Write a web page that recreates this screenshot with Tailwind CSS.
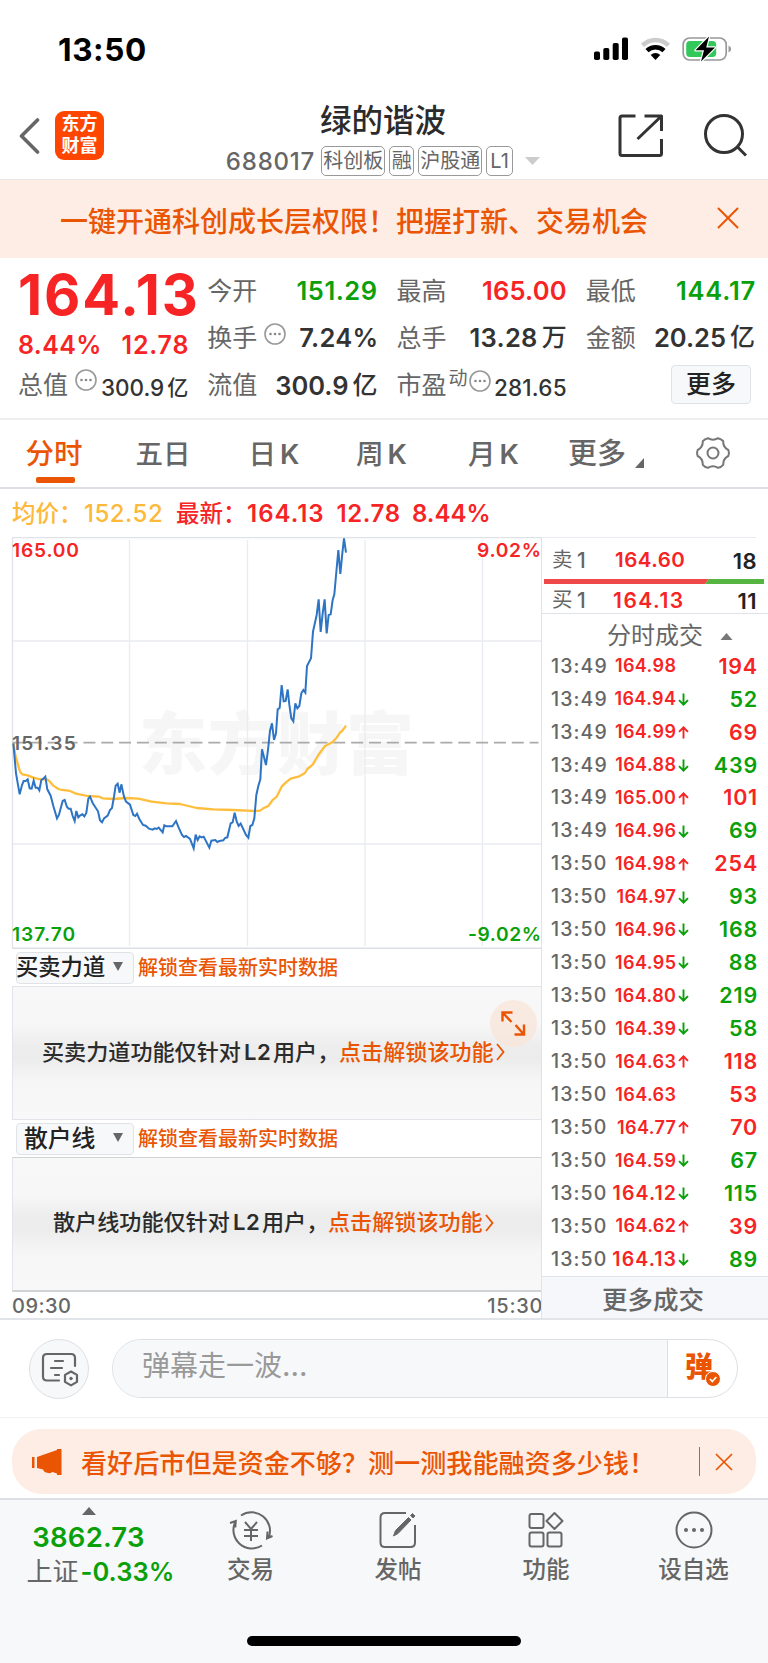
<!DOCTYPE html>
<html lang="zh-CN">
<head>
<meta charset="utf-8">
<title>绿的谐波 688017</title>
<script src="https://cdn.jsdelivr.net/npm/@tailwindcss/browser@4"></script>
</head>
<body class="w-[768px] h-[1663px] overflow-hidden bg-white font-['Inter','Noto_Sans_CJK_SC',sans-serif] font-medium leading-none text-[#666] whitespace-nowrap">

<!-- status bar -->
<div class="h-[98px] flex items-center justify-between pl-[58px] pr-[36px]">
  <span class="text-[31.5px] font-bold text-black tracking-[0.6px] pt-px">13:50</span>
  <div class="flex items-center gap-[11px]">
    <svg width="35" height="24" viewBox="0 0 35 24"><rect x="0" y="14.500" width="6" height="8.500" rx="1.800"/><rect x="9.300" y="11" width="6" height="12" rx="1.800"/><rect x="18.700" y="6" width="6" height="17" rx="1.800"/><rect x="28" y="0.500" width="6" height="22.500" rx="1.800"/></svg>
    <svg width="31" height="24" viewBox="0 0 31 24" fill="none"><path d="M2.500 8.300a18.500 18.500 0 0 1 26 0" stroke="#ccc" stroke-width="4.600"/><path d="M7 13.600a12.300 12.300 0 0 1 17 0" stroke="#000" stroke-width="4.400"/><path d="M15.500 23l-4.800-5a7 7 0 0 1 9.600 0z" fill="#000"/></svg>
    <svg width="50" height="26" viewBox="0 0 50 26"><rect x="1.200" y="2" width="43" height="22" rx="6.500" fill="#fff" stroke="#999" stroke-width="1.700"/><path d="M46.500 9.500v7q2.700-1 2.700-3.500t-2.700-3.500z" fill="#999"/><rect x="4.200" y="5" width="30" height="16" rx="3.800" fill="#34c759"/><path d="M27 0.500L13.500 14.300h8.500L19 25.500 33 11.500h-8.800z" fill="#000" stroke="#fff" stroke-width="2.400" stroke-linejoin="round" paint-order="stroke"/></svg>
  </div>
</div>

<!-- title bar -->
<header class="h-[82px] border-b border-[#e8e8e8] grid grid-cols-[1fr_auto_1fr] pl-[19px] pr-[21px]">
  <div class="flex items-start gap-[15px] pt-[13px]">
    <svg class="mt-[6px]" width="21" height="38" viewBox="0 0 21 38" fill="none" stroke="#666" stroke-width="3.600" stroke-linecap="round" stroke-linejoin="round"><path d="M18.500 3L2.500 19l16 16"/></svg>
    <div class="w-[49px] h-[49px] rounded-[9px] bg-[#ff4600] text-white text-[18px] font-bold leading-[22px] pt-[2px] text-center"><div>东方</div><div>财富</div></div>
  </div>
  <div class="flex flex-col items-center">
    <h1 class="h-[44px] leading-[45px] text-[31.5px] font-medium text-[#2b2b2b]">绿的谐波</h1>
    <div class="h-[38px] flex items-center gap-[4px] text-[20px] font-normal">
      <span class="text-[24px] font-medium tracking-[0.8px] mr-[2px] pt-px">688017</span>
      <span class="h-[30px] leading-[28px] w-[64px] text-center border-[1.5px] border-[#999] rounded-[5px]">科创板</span>
      <span class="h-[30px] leading-[28px] w-[25px] flex justify-center border-[1.5px] border-[#999] rounded-[5px]"><span>融</span></span>
      <span class="h-[30px] leading-[28px] w-[64px] text-center border-[1.5px] border-[#999] rounded-[5px]">沪股通</span>
      <span class="h-[30px] leading-[28px] w-[27px] text-center border-[1.5px] border-[#999] rounded-[5px]">L1</span>
      <svg class="ml-[8px]" width="15" height="8" viewBox="0 0 15 8"><path d="M0 0h15L7.500 8z" fill="#ccc"/></svg>
    </div>
  </div>
  <div class="flex justify-end items-start gap-[40px] pt-[14px]">
    <svg width="46" height="48" viewBox="0 0 46 48" fill="none" stroke="#333" stroke-width="3" stroke-linejoin="round"><path d="M18.500 4H5Q3 4 3 6v35.500q0 2 2 2h37.500q2 0 2-2V27M27.500 4h17v15M44 4.500L20.500 27"/></svg>
    <svg width="44" height="48" viewBox="0 0 44 48" fill="none" stroke="#333" stroke-width="3"><circle cx="21" cy="22" r="18.500"/><path d="M34 34.500l9 9"/></svg>
  </div>
</header>

<!-- notice -->
<div class="h-[78px] bg-[#fdede4] flex items-center justify-between pl-[60px] pr-[29px] text-[#ea5504]">
  <span class="text-[28px] pt-[5px]">一键开通科创成长层权限！把握打新、交易机会</span>
  <svg class="-mt-[2px]" width="22" height="22" viewBox="0 0 22 22" stroke="#ea5504" stroke-width="2" stroke-linecap="round"><path d="M1.500 1.500l19 19M20.500 1.500l-19 19"/></svg>
</div>

<!-- quote figures -->
<section class="h-[162px] border-b-2 border-[#eee] pl-[18px] pr-[13px] pt-[9.5px] grid grid-cols-4 gap-x-[20px] text-[25.5px]">
  <div>
    <div class="h-[53px] leading-[54px] text-[56px] font-bold text-[#f62424] tracking-[1.9px]">164.13</div>
    <div class="h-[50px] flex items-center justify-between text-[25px] text-[#f62424] font-semibold"><span class="tracking-[0.4px]">8.44%</span><span class="tracking-[0.8px] -mr-[2px]">12.78</span></div>
    <div class="h-[29px] flex items-center text-[#333] pt-px"><span class="text-[25px] text-[#666] font-normal">总值</span>
      <svg class="ml-[7px] -mt-[11px]" width="22" height="22" viewBox="0 0 22 22" fill="#888"><circle cx="11" cy="11" r="10" fill="none" stroke="#999" stroke-width="1.600"/><circle cx="6.500" cy="11" r="1.300"/><circle cx="11" cy="11" r="1.300"/><circle cx="15.500" cy="11" r="1.300"/></svg>
      <span class="ml-auto -mr-px flex gap-[3px] text-[22.5px] pt-[5px]">300.9<span class="text-[21px] leading-[22px]">亿</span></span></div>
  </div>
  <div>
    <div class="h-[47px] flex items-center justify-between"><span class="text-[25px] font-normal">今开</span><span class="text-[#0aa00a] font-semibold tracking-[0.5px] -mr-[1px]">151.29</span></div>
    <div class="h-[47px] flex items-center text-[#333]"><span class="text-[25px] text-[#666] font-normal">换手</span>
      <svg class="ml-[7px] -mt-[9px]" width="22" height="22" viewBox="0 0 22 22" fill="#888"><circle cx="11" cy="11" r="10" fill="none" stroke="#999" stroke-width="1.600"/><circle cx="6.500" cy="11" r="1.300"/><circle cx="11" cy="11" r="1.300"/><circle cx="15.500" cy="11" r="1.300"/></svg>
      <span class="ml-auto font-semibold tracking-[0.3px] -mr-[2px]">7.24%</span></div>
    <div class="h-[47px] flex items-center justify-between pt-px"><span class="text-[25px] font-normal">流值</span><span class="-mr-px flex gap-[4px] text-[#333]"><span class="font-semibold">300.9</span><span class="text-[25px]">亿</span></span></div>
  </div>
  <div>
    <div class="h-[47px] flex items-center justify-between"><span class="text-[25px] font-normal">最高</span><span class="text-[#f62424] font-semibold tracking-[0.2px] -mr-px">165.00</span></div>
    <div class="h-[47px] flex items-center justify-between"><span class="text-[25px] font-normal">总手</span><span class="-mr-px flex gap-[4px] text-[#333]"><span class="font-semibold tracking-[0.3px]">13.28</span><span class="text-[25px]">万</span></span></div>
    <div class="h-[47px] flex items-center text-[#333] pt-px"><span class="text-[25px] text-[#666] font-normal">市盈</span><span class="ml-[2px] -mt-[14px] text-[19px] text-[#666] font-normal">动</span>
      <svg class="ml-px -mt-[10px]" width="22" height="22" viewBox="0 0 22 22" fill="#888"><circle cx="11" cy="11" r="10" fill="none" stroke="#999" stroke-width="1.600"/><circle cx="6.500" cy="11" r="1.300"/><circle cx="11" cy="11" r="1.300"/><circle cx="15.500" cy="11" r="1.300"/></svg>
      <span class="ml-auto -mr-px text-[22.5px] tracking-[0.2px] pt-[5px]">281.65</span></div>
  </div>
  <div>
    <div class="h-[47px] flex items-center justify-between"><span class="text-[25px] font-normal">最低</span><span class="text-[#0aa00a] font-semibold tracking-[0.8px] -mr-[1px]">144.17</span></div>
    <div class="h-[47px] flex items-center justify-between"><span class="text-[25px] font-normal">金额</span><span class="flex gap-[4px] text-[#333]"><span class="font-semibold">20.25</span><span class="text-[25px]">亿</span></span></div>
    <div class="h-[47px] flex items-center justify-end"><span class="mr-[4px] -mt-[2px] w-[80px] h-[39px] leading-[37px] text-center text-[25px] text-[#222] bg-[#f7f8fa] border-[1.5px] border-[#dfe2e7] rounded-[4px]">更多</span></div>
  </div>
</section>

<!-- chart period tabs -->
<nav class="h-[69px] border-b-2 border-[#dcdfe4] flex items-start text-[27.5px] leading-[68px]">
  <div class="ml-[25.5px] w-[110px] h-[66px] text-[28.5px] text-[#ea5504]"><div class="h-[57px]">分时</div><div class="ml-[10px] w-[39px] h-[6px] rounded-[2px] bg-[#ea5504]"></div></div>
  <span class="w-[113px]">五日</span>
  <span class="w-[107.5px]">日<span class="ml-[4px] font-semibold">K</span></span>
  <span class="w-[112px]">周<span class="ml-[4px] font-semibold">K</span></span>
  <span class="w-[100px]">月<span class="ml-[4px] font-semibold">K</span></span>
  <span class="text-[29px]">更多</span>
  <svg class="ml-[9px] mt-[38px]" width="9" height="10" viewBox="0 0 9 10"><path d="M9 0v10H0z" fill="#666"/></svg>
  <svg class="ml-[52px] mt-[16px]" width="34" height="34" viewBox="-17 -17 34 34" fill="none" stroke="#777" stroke-width="2"><path d="M15.300-3Q16.500 0 15.300 3Q10 5.750 10.200 11.800Q8.200 14.200 5.100 14.800Q0 11.500-5.100 14.800Q-8.200 14.200-10.200 11.800Q-10 5.750-15.300 3Q-16.500 0-15.300-3Q-10-5.750-10.200-11.800Q-8.200-14.200-5.100-14.800Q0-11.500 5.100-14.800Q8.200-14.200 10.200-11.800Q10-5.750 15.300-3Z"/><circle r="5.500"/></svg>
</nav>

<!-- average / latest -->
<div class="h-[48px] pt-[2px] flex items-center text-[24px] text-[#f62424] pl-[12px]">
  <span class="w-[72px] text-[23.5px] text-[#fdb93a]">均价：</span><span class="w-[92px] text-[#fdb93a] tracking-[0.5px]">152.52</span>
  <span class="w-[71px] text-[23.5px]">最新：</span><span class="w-[89.500px] font-semibold tracking-[1px]">164.13</span><span class="w-[75.500px] font-semibold tracking-[0.6px]">12.78</span><span class="font-semibold">8.44%</span>
</div>

<main class="h-[783px] flex border-b-2 border-[#e1e4e8]">
  <!-- left: charts -->
  <div class="w-[541px] shrink-0">
    <svg class="block" width="541" height="412" viewBox="0 537 541 412" fill="none">
      <text x="139" y="769" font-family="Noto Sans CJK SC" font-weight="900" font-size="68" letter-spacing="1" fill="#f6f6f6">东方财富</text>
      <path d="M129.500 540v406M247.500 540v406M365 540v406M482.500 540v406M13 641h528M13 844h528" stroke="#e9ecf1" stroke-width="1.300"/>
      <path d="M12.500 948V537.500H542" stroke="#dfe3e8" stroke-width="1.300"/>
      <path d="M12 948.200h530" stroke="#dcdfe4" stroke-width="1.600"/>
      <path d="M12.500 742.700h526" stroke="#aaa" stroke-width="1.800" stroke-dasharray="12 5.850" stroke-dashoffset="0.500"/>
      <g font-family="Inter" font-weight="600" font-size="19.2">
        <text x="12" y="557" fill="#f62424" letter-spacing="0.8">165.00</text>
        <text x="477" y="557" fill="#f62424" letter-spacing="0.7">9.02%</text>
        <text x="12" y="749.500" fill="#666" letter-spacing="1.100">151.35</text>
        <text x="12" y="941" fill="#0aa00a" letter-spacing="1">137.70</text>
        <text x="468" y="941" fill="#0aa00a" letter-spacing="0.6">-9.02%</text>
      </g>
      <g transform="translate(0 530) scale(.33333)" stroke-linejoin="round">
        <polyline stroke="#ffbd3c" stroke-width="6.800" points="40,640 47,680 60,725 67,733 83,736 100,743 120,748 141,748 150,755 160,767 175,777 185,780 210,783 228,791 262,798 298,800 308,805 340,807 380,804 415,806 455,815 500,820 540,822 590,834 640,838 700,840 740,842 765,843 780,842 790,835 805,828 818,810 830,800 845,770 857,758 872,746 898,739 915,729 922,717 938,704 955,675 975,648 997,637 1010,623 1020,608 1028,601 1038,587"/>
        <polyline stroke="#2d74c4" stroke-width="6" stroke-linejoin="miter" points="40,640 48,730 59,793 66,765 71,753 77,753 83,748 89,775 95,776 101,752 107,773 113,773 118,781 124,750 130,746 136,740 142,778 152,797 160,828 171,865 177,854 188,813 194,810 201,831 206,836 212,836 218,858 224,873 229,843 235,862 241,856 247,853 253,859 259,849 265,806 270,800 278,819 294,844 300,871 306,877 312,865 323,857 330,840 336,834 342,800 347,767 353,761 359,788 364,763 372,800 378,815 390,824 400,855 406,858 411,851 418,867 429,885 437,887 447,896 458,899 464,895 470,897 476,893 488,907 493,886 499,889 517,889 528,873 536,893 546,915 552,921 558,918 570,927 581,955 587,914 593,930 599,919 605,922 611,920 628,953 634,932 646,930 652,936 658,933 670,931 675,924 682,922 692,880 698,877 704,848 710,874 716,888 722,881 738,915 745,923 751,888 757,885 763,865 769,795 775,768 781,748 786,658 798,705 804,660 810,602 816,580 822,630 828,610 833,538 839,534 845,465 851,514 857,513 863,478 868,524 874,565 880,574 886,520 892,535 898,528 904,490 910,480 916,488 921,408 933,385 939,305 950,255 956,208 962,306 968,250 974,208 980,310 986,255 992,253 998,210 1003,193 1015,60 1021,132 1027,70 1032,25 1038,68"/>
      </g>
    </svg>

    <div class="h-[37px] flex items-center pl-[16px]">
      <div class="w-[118px] h-[32px] flex items-center border-[1.5px] border-[#dfe3e8] rounded-[4px] bg-[#f7f8fa] text-[22.3px] text-[#222]"><span class="-ml-px">买卖力道</span><svg class="ml-auto mr-[10px] -mt-[2px]" width="10" height="9" viewBox="0 0 10 9"><path d="M0 0h10L5 9z" fill="#666"/></svg></div>
      <span class="ml-[4px] pt-px text-[20px] text-[#ea5504]">解锁查看最新实时数据</span>
    </div>
    <div class="ml-[12px] h-[134px] border-t border-l border-b border-[#e1e4e8] bg-[linear-gradient(to_bottom,#f8f8f8_0%,#f7f7f7_28%,#ededed_44%,#ececec_54%,#f6f6f6_72%,#f8f8f8_100%)] relative flex items-center text-[22.1px] text-[#2b2b2b] pl-[29px] pb-[2px]">
      <span class="w-[202px]">买卖力道功能仅针对</span><span class="w-[29px] tracking-[0.5px] font-semibold">L2</span><span class="w-[66px]">用户，</span><span class="text-[#ea5504]">点击解锁该功能</span>
      <svg class="ml-[2px]" width="9" height="18" viewBox="0 0 9 18" fill="none" stroke="#ea5504" stroke-width="1.800"><path d="M1 1l6.500 8L1 17"/></svg>
      <div class="absolute left-[477px] top-[13px] w-[47px] h-[47px] rounded-full bg-[#f9e6db]/80">
        <svg width="47" height="47" viewBox="0 0 47 47" fill="none" stroke="#ea5504" stroke-width="2.400"><path d="M12.500 21.500V12.500h10M13 13l8.500 9M34 24.500V34.500H24.500M33.500 34l-8-9"/></svg>
      </div>
    </div>
    <div class="h-[37px] flex items-center pl-[16px]">
      <div class="w-[118px] h-[32px] flex items-center border-[1.5px] border-[#dfe3e8] rounded-[4px] bg-[#f7f8fa] text-[23.800px] text-[#222] pl-[7px]"><span>散户线</span><svg class="ml-auto mr-[10px] -mt-[2px]" width="10" height="9" viewBox="0 0 10 9"><path d="M0 0h10L5 9z" fill="#666"/></svg></div>
      <span class="ml-[4px] pt-px text-[20px] text-[#ea5504]">解锁查看最新实时数据</span>
    </div>
    <div class="ml-[12px] h-[135px] border-t-[1.5px] border-l border-b-2 border-[#d0d3d6] border-l-[#e1e4e8] bg-[linear-gradient(to_bottom,#f8f8f8_0%,#f7f7f7_28%,#ededed_44%,#ececec_54%,#f6f6f6_72%,#f8f8f8_100%)] flex items-center text-[22.1px] text-[#2b2b2b] pl-[40px] pb-[3px]">
      <span class="w-[180px]">散户线功能仅针对</span><span class="w-[29px] tracking-[0.5px] font-semibold">L2</span><span class="w-[66px]">用户，</span><span class="text-[#ea5504]">点击解锁该功能</span>
      <svg class="ml-[2px]" width="9" height="18" viewBox="0 0 9 18" fill="none" stroke="#ea5504" stroke-width="1.800"><path d="M1 1l6.500 8L1 17"/></svg>
    </div>
    <div class="h-[25px] pt-[2px] flex items-center justify-between pl-[12px] text-[20px]"><span class="tracking-[0.5px]">09:30</span><span class="tracking-[0.7px] -mr-[2px]">15:30</span></div>
  </div>

  <!-- right: order book and trades -->
  <div class="w-[227px] border-l-[1.5px] border-[#dfe3e8]">
    <div class="mr-[12px] border-t border-[#e8ebef] h-[41px] pt-[5px] flex items-center text-[22px] text-[#222] font-semibold"><span class="ml-[10px] w-[25px] text-[20.5px] text-[#666] font-normal">卖</span><span class="w-[38px] text-[21px] text-[#666] font-medium">1</span><span class="text-[20.5px] text-[#f62424] tracking-[0.5px]">164.60</span><span class="ml-auto tracking-[0.4px] -mr-px">18</span></div>
    <svg class="ml-[2px] mt-px block" width="220" height="5" viewBox="0 0 220 5"><path d="M0 0h165l-4 5H0z" fill="#ee4848"/><path d="M165 0h55v5h-59z" fill="#55b540"/></svg>
    <div class="h-[30px] pt-[4px] flex items-center text-[22px] text-[#222] font-semibold border-b-[1.5px] border-[#dfe3e8]"><span class="ml-[10px] w-[25px] text-[20.5px] text-[#666] font-normal">买</span><span class="w-[36px] text-[21px] text-[#666] font-medium">1</span><span class="text-[21px] text-[#f62424] tracking-[1.500px]">164.13</span><span class="ml-auto tracking-[0.4px] mr-[11px]">11</span></div>
    <div class="h-[36px] pt-[7px] flex items-center pl-[65px] text-[24px] font-normal">分时成交<svg class="ml-[17px] mt-[1px]" width="13" height="7" viewBox="0 0 12 7"><path d="M0 7h12L6 0z" fill="#777"/></svg></div>
    <div id="trades"></div>
    <div class="h-[42px] leading-[46px] text-[25.500px] pl-[60px] bg-[#f6f7fa] border-t-[1.5px] border-[#dfe3e8]">更多成交</div>
  </div>
</main>

<!-- bullet comment bar -->
<div class="h-[98px] border-b border-[#f0f0f0] flex items-center pl-[29px] pr-[29px]">
  <div class="w-[60px] h-[60px] rounded-full border-[1.5px] border-[#dcdfe4] bg-[#f7f8fa] flex items-center justify-center">
    <svg class="ml-[2px] mt-[2px]" width="38" height="36" viewBox="0 0 38 36" fill="none" stroke="#666" stroke-width="2.200" stroke-linecap="round"><path d="M18 28.500H6q-4 0-4-4V6q0-4 4-4h24q4 0 4 4v8M14 9h8M10 16h11M14 23h4"/><path d="M30 19.500l6 3.400v7l-6 3.500-6-3.500v-7z" stroke-linejoin="round"/><circle cx="30" cy="26.500" r="1.300" fill="#666" stroke-width="1"/></svg>
  </div>
  <div class="ml-[23px] w-[626px] h-[59px] rounded-full border-[1.5px] border-[#dcdfe4] overflow-hidden flex">
    <div class="w-[555px] bg-[#f7f8fa] border-r-[1.5px] border-[#dcdfe4] pl-[29px] leading-[53px] text-[28px] text-[#999] font-normal">弹幕走一波<span class="font-medium">...</span></div>
    <div class="relative flex-1 pl-[17px] leading-[55px] text-[28px] font-black text-[#ea5504]">弹
      <svg class="absolute left-[37px] top-[31px]" width="16" height="16" viewBox="0 0 16 16"><circle cx="8" cy="8" r="7.500" fill="#ea5504" stroke="#fff"/><path d="M5 8l2.300 2.500 4-4.500" fill="none" stroke="#fff" stroke-width="1.700"/></svg>
    </div>
  </div>
</div>

<!-- promo -->
<div class="h-[80px] pt-[11px] px-[12px]">
  <div class="h-[65px] rounded-[30px] bg-[#fdede4] flex items-center text-[#ea5504] text-[26.1px] pl-[19px] pr-[23px]">
    <svg width="32" height="28" viewBox="0 0 32 28" fill="#ea5504"><path d="M1 9h2.500v11H1zM6 9L26 2V1h4.500v26H26v-1.500L21.500 24q-1.500 1.500-4.500 1-4-.5-5-3.500L6 20z"/></svg>
    <span class="ml-[18px] pt-[6px]">看好后市但是资金不够？测一测我能融资多少钱！</span>
    <span class="ml-auto w-[1.5px] h-[29px] bg-[#ea5504]"></span>
    <svg class="ml-[15px]" width="18" height="18" viewBox="0 0 18 18" stroke="#ea5504" stroke-width="1.700"><path d="M1 1l16 16M17 1L1 17"/></svg>
  </div>
</div>

<!-- bottom bar -->
<footer class="h-[165px] bg-[#f7f8fa] border-t-2 border-[#dcdfe3] flex flex-col">
  <div class="flex h-[92px] text-[23.500px]">
    <div class="w-[177px] flex flex-col items-center pt-[7px]">
      <svg width="14" height="8" viewBox="0 0 14 8"><path d="M0 8h14L7 0z" fill="#666"/></svg>
      <div class="mt-[9px] text-[27.500px] font-semibold text-[#0aa00a] tracking-[0.2px]">3862.73</div>
      <div class="mt-[6px] ml-[24px] flex items-center text-[26px] leading-[28px] font-normal">上证<span class="ml-[2px] text-[25.500px] font-semibold text-[#0aa00a] tracking-[0.1px]">-0.33%</span></div>
    </div>
    <div class="w-[147px] flex flex-col items-center pt-[10px] gap-[6px]">
      <svg width="44" height="42" viewBox="0 0 44 42" fill="none" stroke="#666" stroke-width="2"><path d="M12 5.500A18.500 18.500 0 0 1 39.500 28M33 35.500A18.500 18.500 0 0 1 6.500 11.500M1 13l5.800-2-.5 6.500M43.500 26l-5.500 2.500.5-7M16 12l6 7 6-7M15 20h14M15 26h14M22 19v12"/></svg>
      <span class="leading-[24px]">交易</span></div>
    <div class="w-[148px] flex flex-col items-center pt-[10px] gap-[6px]">
      <svg width="42" height="42" viewBox="0 0 42 42" fill="none" stroke="#666" stroke-width="2"><path d="M29 3H8Q3.500 3 3.500 7.500v25Q3.500 37 8 37h25.500q4.500 0 4.500-4.500V15"/><path d="M16.500 26l2-5.500L31.500 7.500l2.500 2.500-13 13.500zM33.500 5.500l2-2 2.500 2.500-2 2z" fill="#666" stroke-width="1"/></svg>
      <span class="leading-[24px]">发帖</span></div>
    <div class="w-[148px] flex flex-col items-center pt-[10px] gap-[6px]">
      <svg width="42" height="42" viewBox="0 0 42 42" fill="none" stroke="#666" stroke-width="2" stroke-linejoin="round"><rect x="4.500" y="4" width="14" height="14" rx="2"/><rect x="4.500" y="22.500" width="14" height="14" rx="2"/><rect x="22.500" y="22.500" width="14" height="14" rx="2"/><path d="M29.500 3l8 8-8 8-8-8z"/></svg>
      <span class="leading-[24px]">功能</span></div>
    <div class="w-[147px] flex flex-col items-center pt-[10px] gap-[6px]">
      <svg width="42" height="42" viewBox="0 0 42 42" fill="#666"><circle cx="21" cy="20" r="17.500" fill="none" stroke="#666" stroke-width="2"/><circle cx="13" cy="20" r="2"/><circle cx="21" cy="20" r="2"/><circle cx="29" cy="20" r="2"/></svg>
      <span class="leading-[24px]">设自选</span></div>
  </div>
  <div class="mt-[44px] mx-auto w-[274px] h-[10px] rounded-full bg-black"></div>
</footer>

<script>
  // [time, price, direction of last tick, volume, volume side]
  const trades = [
    ['13:49','164.98','','194','r'],['13:49','164.94','d','52','g'],['13:49','164.99','u','69','r'],
    ['13:49','164.88','d','439','g'],['13:49','165.00','u','101','r'],['13:49','164.96','d','69','g'],
    ['13:50','164.98','u','254','r'],['13:50','164.97','d','93','g'],['13:50','164.96','d','168','g'],
    ['13:50','164.95','d','88','g'],['13:50','164.80','d','219','g'],['13:50','164.39','d','58','g'],
    ['13:50','164.63','u','118','r'],['13:50','164.63','','53','r'],['13:50','164.77','u','70','r'],
    ['13:50','164.59','d','67','g'],['13:50','164.12','d','115','g'],['13:50','164.62','u','39','r'],
    ['13:50','164.13','d','89','g']];
  const down = '<svg width="11" height="13" viewBox="0 0 11 13" fill="none" stroke="#0aa00a" stroke-width="1.9"><path d="M5.500 0.500V11.500M1 7.200l4.500 4.500L10 7.200"/></svg>';
  const up = '<svg width="11" height="13" viewBox="0 0 11 13" fill="none" stroke="#f62424" stroke-width="1.9"><path d="M5.500 12.500V1.500M1 5.800l4.500-4.500L10 5.800"/></svg>';
  document.getElementById('trades').innerHTML = trades.map(([t, p, d, v, s]) => {
    const price = /\.1/.test(p) ? 'text-[19.5px] tracking-[1.1px] -mr-[1.1px]' : 'text-[18px] tracking-[0.4px] -mr-[0.4px]';
    const vol = s === 'r' ? 'text-[#f62424]' : 'text-[#0aa00a]';
    return `<div class="h-[32.94px] flex items-center pl-[9px] pr-[11px]">
      <span class="w-[58px] text-[19.5px] tracking-[1.1px]">${t}</span>
      <span class="w-[67px] flex justify-end text-[#f62424] font-semibold"><span class="${price}">${p}</span></span>
      <span class="w-[13px] pl-[2px]">${d === 'd' ? down : d === 'u' ? up : ''}</span>
      <span class="ml-auto text-[21.5px] font-semibold tracking-[0.8px] -mr-[1px] ${vol}">${v}</span></div>`;
  }).join('');
</script>
</body>
</html>
